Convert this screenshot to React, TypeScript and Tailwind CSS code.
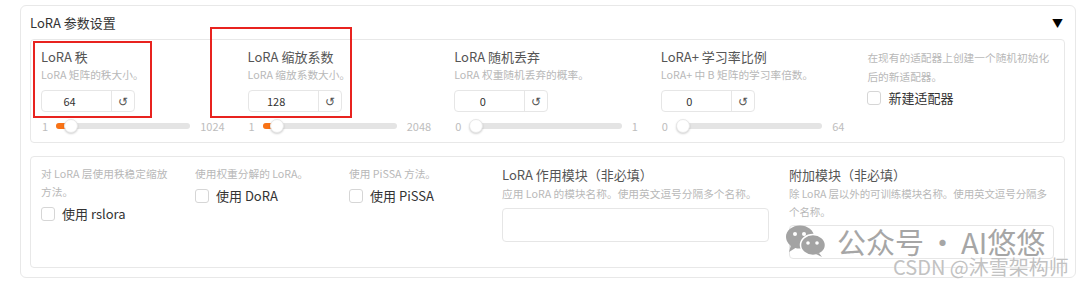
import React from "react";

const font = { fontFamily: '"Noto Sans CJK SC", "Noto Sans", sans-serif' };

type SliderField = {
  label: string;
  desc: string;
  value: number;
  min: number;
  max: number;
};

const sliderFields: SliderField[] = [
  { label: "LoRA 秩", desc: "LoRA 矩阵的秩大小。", value: 64, min: 1, max: 1024 },
  { label: "LoRA 缩放系数", desc: "LoRA 缩放系数大小。", value: 128, min: 1, max: 2048 },
  { label: "LoRA 随机丢弃", desc: "LoRA 权重随机丢弃的概率。", value: 0, min: 0, max: 1 },
  { label: "LoRA+ 学习率比例", desc: "LoRA+ 中 B 矩阵的学习率倍数。", value: 0, min: 0, max: 64 },
];

function Checkbox({ label }: { label: string }) {
  return (
    <div className="flex h-[22px] items-center gap-[7px]">
      <span className="h-[14px] w-[14px] rounded-[3px] border border-[#d6d6d6] bg-white" />
      <span className="text-[13px] text-[#333]">{label}</span>
    </div>
  );
}

function Slider({ value, min, max }: { value: number; min: number; max: number }) {
  const pct = (value - min) / (max - min);
  return (
    <div className="flex h-[16px] items-center pr-[3px] text-[11px] text-[#bdbdbd]">
      <span className="ml-[1px] mr-[8px]">{min}</span>
      <div className="relative h-[6px] flex-1 rounded-full bg-[#e4e4e4]">
        {pct > 0 && (
          <div
            className="absolute left-0 top-0 h-[6px] rounded-full bg-[#f97316]"
            style={{ width: `calc(7px + ${pct} * (100% - 14px))` }}
          />
        )}
        <div
          className="absolute top-[-4px] h-[14px] w-[14px] rounded-full border border-[#e8e8e8] bg-white shadow-[0_1px_2px_rgba(0,0,0,0.18)]"
          style={{ left: `calc(${pct} * (100% - 14px))` }}
        />
      </div>
      <span className="ml-[10px]">{max}</span>
    </div>
  );
}

function NumberField({ value }: { value: number }) {
  return (
    <div className="flex h-[22px] w-[94px] rounded-[4px] border border-[#e6e6e6] bg-white">
      <div className="flex flex-1 items-center justify-center pr-[14px] text-[11px] text-[#333]">{value}</div>
      <div className="flex w-[23px] items-center justify-center border-l border-[#e6e6e6] text-[12px] text-[#555]">↺</div>
    </div>
  );
}

function WeChatIcon() {
  return (
    <svg width="42" height="32" viewBox="0 0 42 32" fill="#a3a3a3">
      <ellipse cx="15" cy="12" rx="14" ry="11.5" />
      <path d="M6 20 L4 27 L12 22 Z" />
      <ellipse cx="28" cy="20" rx="12.5" ry="10.5" fill="#a3a3a3" stroke="#fff" strokeWidth="1.5" />
      <path d="M34 28 L37 32 L31 29 Z" />
      <circle cx="10" cy="9" r="2" fill="#fff" />
      <circle cx="19" cy="9" r="2" fill="#fff" />
      <circle cx="23" cy="18" r="1.8" fill="#fff" />
      <circle cx="32" cy="18" r="1.8" fill="#fff" />
    </svg>
  );
}

export default function App() {
  return (
    <div className="relative h-[286px] w-[1080px] overflow-hidden bg-white" style={font}>
      <div className="ml-[20px] mt-[5px] w-[1056px] rounded-[6px] border border-[#e8e8e8] pb-[9px] pl-[9px] pr-[10px] pt-[8px]">
        <div className="flex h-[18px] items-center justify-between">
          <span className="text-[13px] leading-[18px] text-[#333]">LoRA 参数设置</span>
          <span className="mr-[2px] text-[11px] text-black">▼</span>
        </div>

        <div className="mt-[7px] grid grid-cols-5 gap-x-[20px] rounded-[4px] border border-[#e8e8e8] px-[10px] pb-[8px] pt-[8px]">
          {sliderFields.map((f) => (
            <div key={f.label} className="flex flex-col">
              <span className="text-[13px] leading-[18px] text-[#555]">{f.label}</span>
              <span className="text-[10.7px] leading-[18px] text-[#b8b8b8]">{f.desc}</span>
              <div className="mt-[6px]">
                <NumberField value={f.value} />
              </div>
              <div className="mt-[6px]">
                <Slider value={f.value} min={f.min} max={f.max} />
              </div>
            </div>
          ))}
          <div className="flex flex-col">
            <span className="text-[10.7px] leading-[19px] text-[#b8b8b8]">在现有的适配器上创建一个随机初始化后的新适配器。</span>
            <div className="mt-[1px]">
              <Checkbox label="新建适配器" />
            </div>
          </div>
        </div>

        <div className="mt-[13px] grid grid-cols-[134px_134px_133px_267px_1fr] gap-x-[20px] rounded-[4px] border border-[#e8e8e8] px-[10px] pb-[8px] pt-[8px]">
          <div className="flex flex-col">
            <span className="text-[10.7px] leading-[18px] text-[#b8b8b8]">对 LoRA 层使用秩稳定缩放方法。</span>
            <div className="mt-[2px]">
              <Checkbox label="使用 rslora" />
            </div>
          </div>
          <div className="flex flex-col">
            <span className="text-[10.7px] leading-[18px] text-[#b8b8b8]">使用权重分解的 LoRA。</span>
            <div className="mt-[2px]">
              <Checkbox label="使用 DoRA" />
            </div>
          </div>
          <div className="flex flex-col">
            <span className="text-[10.7px] leading-[18px] text-[#b8b8b8]">使用 PiSSA 方法。</span>
            <div className="mt-[2px]">
              <Checkbox label="使用 PiSSA" />
            </div>
          </div>
          <div className="flex flex-col">
            <span className="text-[13px] leading-[20px] text-[#555]">LoRA 作用模块（非必填）</span>
            <span className="text-[10.7px] leading-[18px] text-[#b8b8b8]">应用 LoRA 的模块名称。使用英文逗号分隔多个名称。</span>
            <div className="mt-[5px] h-[34px] rounded-[4px] border border-[#e6e6e6] bg-white" />
          </div>
          <div className="flex flex-col">
            <span className="text-[13px] leading-[20px] text-[#555]">附加模块（非必填）</span>
            <span className="text-[10.5px] leading-[18px] tracking-[-0.1px] text-[#b8b8b8]">除 LoRA 层以外的可训练模块名称。使用英文逗号分隔多个名称。</span>
            <div className="mt-[4px] h-[34px] rounded-[4px] border border-[#e6e6e6] bg-white" />
          </div>
        </div>
      </div>

      {/* annotation boxes */}
      <div className="absolute left-[33px] top-[41px] h-[77px] w-[119px] border-2 border-[#e8231f]" />
      <div className="absolute left-[210px] top-[27px] h-[91px] w-[142px] border-2 border-[#e8231f]" />

      {/* watermarks */}
      <div className="absolute left-[785px] top-[226px] flex h-[30px] items-center gap-[10px] whitespace-nowrap text-[29px] leading-[30px] text-[#a6a6a6]">
        <WeChatIcon />
        <span className="flex">
          <span>公众号</span>
          <span className="inline-block w-[37px] text-center">·</span>
          <span>AI悠悠</span>
        </span>
      </div>
      <div className="absolute left-[893px] top-[257px] whitespace-nowrap text-[20px] leading-[20px] text-[#c2c2c2] [text-shadow:0_0_2px_#fff]">
        CSDN @沐雪架构师
      </div>
    </div>
  );
}
